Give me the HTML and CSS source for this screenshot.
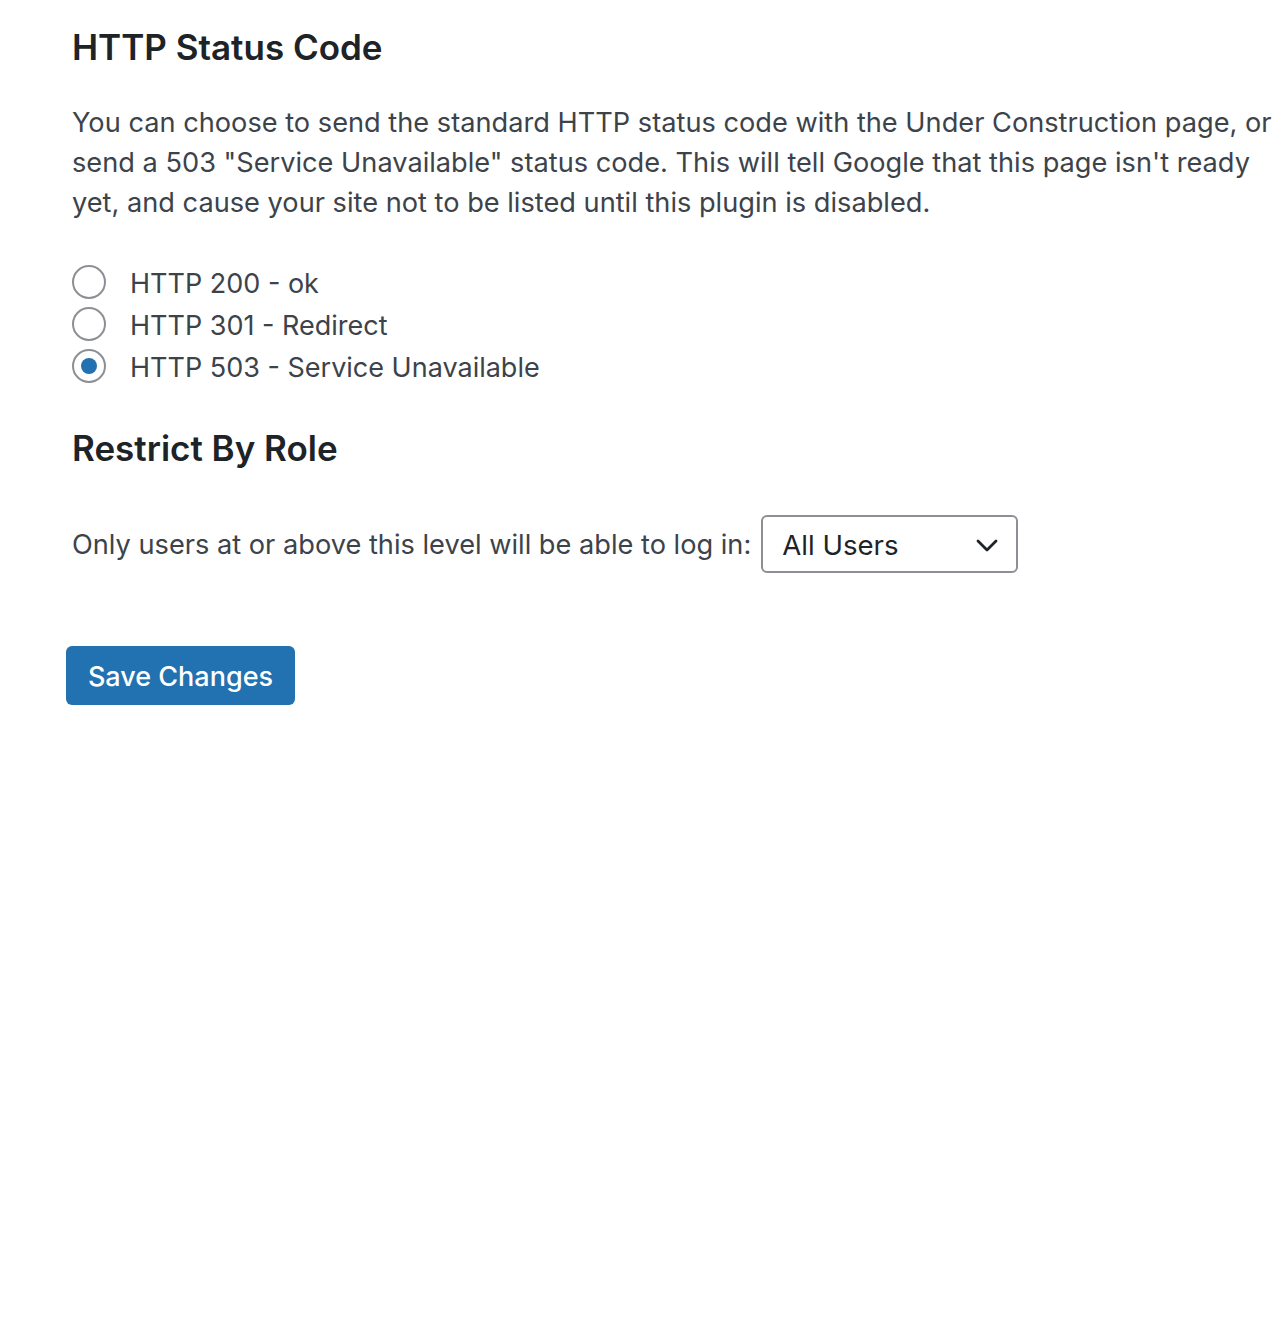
FILE: index.html
```html
<!DOCTYPE html>
<html lang="en">
<head>
    <meta charset="UTF-8">
    <title>Under Construction Settings</title>
    <link rel="stylesheet" href="styles.css">
</head>
<body>

<div id="wrap">
    <h2 class="section-title">HTTP Status Code</h2>
    <p class="description">
        You can choose to send the standard HTTP status code with the Under Construction page, or<br>
        send a 503 "Service Unavailable" status code. This will tell Google that this page isn't ready<br>
        yet, and cause your site not to be listed until this plugin is disabled.
    </p>

    <div class="radio-list">
        <label class="radio-row"><input type="radio" name="http_status" value="200"><span>HTTP 200 - ok</span></label>
        <label class="radio-row"><input type="radio" name="http_status" value="301"><span>HTTP 301 - Redirect</span></label>
        <label class="radio-row"><input type="radio" name="http_status" value="503" checked><span>HTTP 503 - Service Unavailable</span></label>
    </div>

    <h2 class="section-title">Restrict By Role</h2>
    <div class="role-row">
        <label for="required_role">Only users at or above this level will be able to log in:</label>
        <div class="select-box" id="required_role">
            <span>All Users</span>
            <svg width="26" height="26" viewBox="0 0 26 26"><path d="M4 9l9 9 9-9" fill="none" stroke="#1d2327" stroke-width="2.8" stroke-linecap="round" stroke-linejoin="round"/></svg>
        </div>
    </div>

    <button class="save-button">Save Changes</button>
</div>

</body>
</html>
```

FILE: styles.css
```css
body {
    font-family: Inter, "Noto Sans", sans-serif;
    margin: 0;
    background-color: #fff;
    color: #3c434a;
}
#wrap {
    padding: 25px 0 0 72px;
}
.section-title {
    font-size: 35px;
    line-height: 44px;
    font-weight: 600;
    color: #1d2327;
    margin: 0;
}
.description {
    font-size: 27.2px;
    line-height: 40px;
    margin: 34px 0 38px 0;
    white-space: nowrap;
}
.radio-list {
    display: flex;
    flex-direction: column;
    margin-bottom: 39px;
}
.radio-row {
    display: flex;
    align-items: center;
    box-sizing: border-box;
    height: 42px;
    font-size: 27px;
    padding-top: 2px;
}
.radio-row input {
    appearance: none;
    width: 34px;
    height: 34px;
    margin: -3px 24px 0 0;
    border: 2px solid #8c8f94;
    border-radius: 50%;
    display: flex;
    align-items: center;
    justify-content: center;
}
.radio-row input:checked::before {
    content: "";
    width: 16px;
    height: 16px;
    border-radius: 50%;
    background-color: #2271b1;
}
.role-row {
    display: flex;
    align-items: center;
    gap: 10px;
    margin-top: 45px;
    font-size: 27.2px;
}
.select-box {
    display: flex;
    align-items: center;
    justify-content: space-between;
    width: 257px;
    height: 58px;
    box-sizing: border-box;
    padding: 2px 16px 0 19px;
    border: 2px solid #8c8f94;
    border-radius: 6px;
    color: #1d2327;
    font-size: 27.6px;
}
.save-button {
    display: block;
    margin: 73px 0 0 -6px;
    width: 229px;
    height: 59px;
    background-color: #2271b1;
    color: white;
    border: none;
    border-radius: 6px;
    font-family: inherit;
    font-size: 27px;
    font-weight: 500;
    padding-top: 3px;
}
```
